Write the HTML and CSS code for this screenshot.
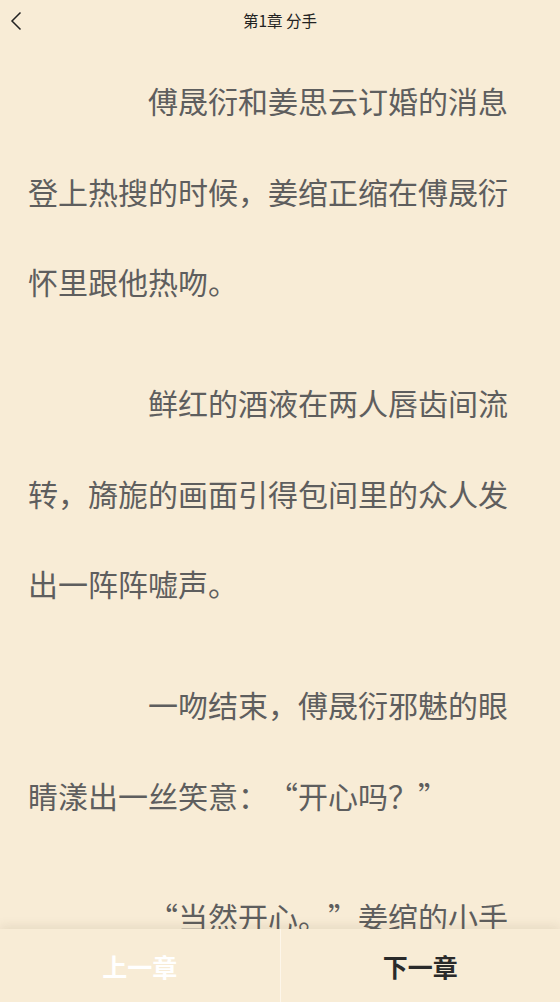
FILE: index.html
```html
<!DOCTYPE html>
<html lang="zh-Hans">
<head>
<meta charset="utf-8">
<link rel="stylesheet" href="styles.css">
</head>
<body>
<div class="page">
  <header class="topbar">
    <span class="back">
      <svg width="12" height="20" viewBox="0 0 12 20"><path d="M10.5 1.5 L2 10 L10.5 18.5" fill="none" stroke="#222" stroke-width="1.5"/></svg>
    </span>
    <h1 class="title">第1章 分手</h1>
  </header>
  <main class="content">
    <p>傅晟衍和姜思云订婚的消息登上热搜的时候，姜绾正缩在傅晟衍怀里跟他热吻。</p>
    <p>鲜红的酒液在两人唇齿间流转，旖旎的画面引得包间里的众人发出一阵阵嘘声。</p>
    <p>一吻结束，傅晟衍邪魅的眼睛漾出一丝笑意：<span class="ql">“</span>开心吗？<span class="qr">”</span></p>
    <p><span class="ql">“</span>当然开心。<span class="qr">”</span>姜绾的小手勾住他的脖子，眼里满是笑意。</p>
  </main>
  <nav class="bottombar">
    <button class="btn prev">上一章</button>
    <button class="btn next">下一章</button>
  </nav>
</div>
</body>
</html>
```
FILE: styles.css
```css
html, body {
  margin: 0;
  padding: 0;
  background: #f8ecd6;
}
body {
  font-family: "Noto Sans CJK SC", "Noto Sans", sans-serif;
  width: 560px;
  height: 1002px;
  overflow: hidden;
}
.page {
  position: relative;
  width: 560px;
  height: 1002px;
  overflow: hidden;
}
.topbar {
  height: 40px;
  display: flex;
  align-items: center;
  justify-content: center;
  position: relative;
}
.back {
  position: absolute;
  left: 10px;
  top: 11px;
  display: flex;
}
.title {
  margin: 0;
  font-size: 15.5px;
  font-weight: normal;
  color: #222;
}
.content {
  padding: 15px 28px 0;
}
.content p {
  margin: 0 0 30.5px;
  font-size: 30px;
  line-height: 90.5px;
  text-indent: 4em;
  color: #5e5e5e;
}
.ql, .qr {
  display: inline-block;
  width: 1em;
  text-indent: 0;
}
.ql {
  text-align: right;
}
.qr {
  text-align: left;
}
.bottombar {
  position: absolute;
  left: 0;
  right: 0;
  bottom: 0;
  height: 73px;
  display: flex;
  background: #f8ecd6;
  box-shadow: 0 -3px 10px rgba(80, 60, 30, 0.10);
}
.btn {
  flex: 1;
  border: none;
  background: transparent;
  font-family: "Noto Sans CJK SC", "Noto Sans", sans-serif;
  font-size: 25px;
  font-weight: bold;
  padding: 0;
}
.prev {
  color: #ffffff;
  border-right: 1px solid #fdf6ea;
}
.next {
  color: #2a2a2a;
}
```
